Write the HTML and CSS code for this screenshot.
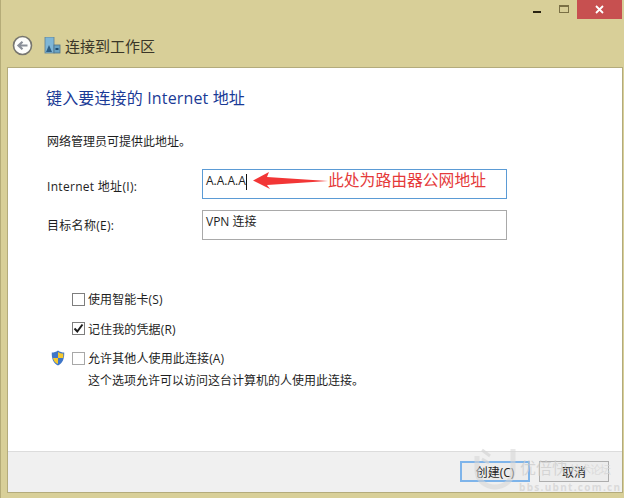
FILE: index.html
```html
<!DOCTYPE html>
<html lang="zh-CN">
<head>
<meta charset="utf-8">
<title>连接到工作区</title>
<link rel="stylesheet" href="styles.css">
</head>
<body>
<div class="window">
  <div class="titlebar">
    <span class="win-btn min"><svg width="9" height="3" viewBox="0 0 9 3"><rect width="8" height="2" y="0" fill="#2a2412"/></svg></span>
    <span class="win-btn max"><svg width="11" height="9" viewBox="0 0 11 9"><rect x=".5" y=".5" width="9" height="7" fill="none" stroke="#7a7045"/><rect x="0" y="0" width="10" height="2" fill="#7a7045"/></svg></span>
    <span class="win-btn close"><svg width="9" height="9" viewBox="0 0 9 9"><path d="M1 1l7 7M8 1L1 8" stroke="#fff" stroke-width="1.8"/></svg></span>
  </div>
  <div class="navbar">
    <svg class="back" width="21" height="21" viewBox="0 0 21 21"><circle cx="10.5" cy="10.5" r="9" fill="#fdfdfb" stroke="#77766f" stroke-width="1.6"/><path d="M15.5 10.5H7M10.5 6.8l-4 3.7 4 3.7" fill="none" stroke="#8a8f98" stroke-width="2.2"/></svg>
    <svg class="netico" width="17" height="17" viewBox="0 0 17 17"><rect x="1" y="0" width="9" height="16" fill="#7fb6d6" stroke="#5d7f95" stroke-width=".8"/><path d="M2 15l3-7 3 7z" fill="#2f5f85"/><rect x="10" y="8" width="6" height="8" fill="#6aa3c4" stroke="#4f7188" stroke-width=".8"/><rect x="11.500" y="11" width="3" height="2" fill="#1f4c70"/></svg>
    <span class="navtitle">连接到工作区</span>
  </div>
  <div class="panel">
    <main class="content">
      <h1 class="heading">键入要连接的 Internet 地址</h1>
      <p class="hint">网络管理员可提供此地址。</p>
      <div class="field first">
        <label class="field-label">Internet 地址(I):</label>
        <div class="input focus"><span class="val">A.A.A.A</span><span class="caret"></span>
          <svg class="arrow" width="76" height="18" viewBox="0 0 76 18"><path d="M0 8.500L16 0l-2 5 61 4-61 4 3 4z" fill="#f23636"/></svg>
          <span class="note">此处为路由器公网地址</span>
        </div>
      </div>
      <div class="field">
        <label class="field-label">目标名称(E):</label>
        <div class="input"><span class="val">VPN 连接</span></div>
      </div>
      <div class="options">
        <div class="check-row"><span class="box"></span><span class="opt">使用智能卡(S)</span></div>
        <div class="check-row"><span class="box"><svg width="11" height="11" viewBox="0 0 11 11"><path d="M1.500 5.500l2.800 3L9.500 1.500" fill="none" stroke="#1c1c1c" stroke-width="2"/></svg></span><span class="opt">记住我的凭据(R)</span></div>
        <div class="check-row shielded">
          <svg class="shield" width="14" height="16" viewBox="0 0 14 16"><path d="M7 .5C5 2 3 2.500 .8 2.500 .5 8 2 13 7 15.500 12 13 13.500 8 13.200 2.500 11 2.500 9 2 7 .5z" fill="#3f76c8"/><path d="M7 2v6H2c.3 2.500 2 5 5 6V8h5.200c.2-2 .1-3 0-4.500C10.500 3.500 8.500 3 7 2z" fill="#f6c92f"/></svg>
          <span class="box light"></span><span class="opt">允许其他人使用此连接(A)</span>
        </div>
        <p class="sub">这个选项允许可以访问这台计算机的人使用此连接。</p>
      </div>
    </main>
    <footer class="footer">
      <button class="btn primary">创建(C)</button>
      <button class="btn">取消</button>
    </footer>
  </div>
  <div class="watermark">
    <svg width="44" height="44" viewBox="0 0 44 44"><path d="M3 9v14c0 10 8 17 18 17s18-7 18-17V2" fill="none" stroke="#d6d6d6" stroke-width="5" opacity=".55"/><path d="M8 3l8 6M8 12l7 4" stroke="#d6d6d6" stroke-width="3" opacity=".7"/></svg>
    <span class="wm-big">优倍快</span><span class="wm-small">技术论坛</span>
    <span class="wm-url">bbs.ubnt.com.cn</span>
  </div>
</div>
</body>
</html>
```
FILE: styles.css
```css
* { box-sizing: border-box; }
html, body { margin: 0; padding: 0; }
body {
  width: 624px;
  height: 498px;
  overflow: hidden;
  font-family: "Open Sans", "Noto Sans CJK SC", sans-serif;
  font-size: 12px;
  color: #1e1e1e;
}
.window {
  position: relative;
  width: 624px;
  height: 498px;
  background: #d8cf98;
  border-left: 1px solid #b5ac78;
  display: flex;
  flex-direction: column;
  padding: 0 2px 6px 7px;
}
.titlebar {
  height: 19px;
  display: flex;
  justify-content: flex-end;
  flex: none;
}
.win-btn { display: flex; align-items: center; justify-content: center; height: 19px; }
.min { width: 30px; padding-top: 5px; }
.max { width: 24px; margin-right: 1px; }
.close { width: 45px; background: #c75050; }
.navbar {
  height: 49px;
  flex: none;
  display: flex;
  align-items: center;
  padding: 4px 0 0 4px;
}
.back { margin-right: 11px; }
.netico { margin-right: 4px; }
.navtitle { font-size: 15px; color: #3a3628; }
.panel {
  flex: 1;
  display: flex;
  flex-direction: column;
  background: #fff;
  box-shadow: 0 0 0 1px #b3ab7c;
  min-height: 0;
}
.content { flex: 1; padding: 0 0 0 38px; min-height: 0; }
.heading {
  margin: 19px 0 0;
  font-size: 16px;
  line-height: 22px;
  font-weight: 400;
  color: #1a3a96;
  letter-spacing: .15px;
}
.hint { margin: 25px 0 0 1px; line-height: 16px; font-size: 12px; }
.field { display: flex; align-items: center; margin-top: 10px; }
.field.first { margin-top: 19px; }
.field-label { width: 156px; padding-left: 1px; letter-spacing: .3px; }
.first .field-label { padding-top: 4px; }
.field + .field { margin-top: 11px; }
.input {
  position: relative;
  width: 305px;
  height: 30px;
  border: 1px solid #a9a9a9;
  padding: 2px 3px;
  display: flex;
  align-items: flex-start;
  line-height: 18px;
}
.input.focus { border-color: #5b9bd5; }
.val { font-size: 12px; }
.caret { width: 1px; height: 16px; background: #111; margin-top: 2px; }
.arrow { position: absolute; left: 50px; top: 2px; }
.note {
  position: absolute;
  left: 125px;
  top: 0;
  font-size: 15.800px;
  line-height: 20px;
  color: #e53a3a;
  white-space: nowrap;
}
.options { margin-top: 51px; padding-left: 26px; }
.check-row { position: relative; display: flex; align-items: center; gap: 3px; height: 16px; margin-bottom: 13.500px; }
.opt { letter-spacing: .12px; }
.box {
  width: 13px;
  height: 13px;
  border: 1px solid #7e7e7e;
  background: #fff;
  display: flex;
  align-items: center;
  justify-content: center;
  flex: none;
}
.box.light { border-color: #a8a8a8; }
.shield { position: absolute; left: -21px; top: 0; }
.sub { margin: -7px 0 0 16px; line-height: 16px; }
.footer {
  flex: none;
  height: 41px;
  background: #f0f0f0;
  border-top: 1px solid #dcdcdc;
  display: flex;
  justify-content: flex-end;
  align-items: flex-start;
  gap: 9px;
  padding: 9px 13px 0 0;
}
.btn {
  width: 70px;
  height: 21px;
  padding: 0;
  font: inherit;
  color: #1e1e1e;
  background: #ececec;
  border: 1px solid #adadad;
  border-radius: 0;
}
.btn.primary { border: 2px solid #7eb4ea; }
.watermark {
  position: absolute;
  left: 473px;
  top: 447px;
  width: 150px;
  height: 48px;
  pointer-events: none;
}
.watermark svg { position: absolute; left: 0; top: 0; }
.wm-big { position: absolute; left: 46px; top: 10px; font-size: 16px; line-height: 22px; color: rgba(205,205,205,.75); }
.wm-small { position: absolute; left: 96px; top: 15px; font-size: 11px; line-height: 16px; color: rgba(215,215,215,.8); white-space: nowrap; letter-spacing: -1px; }
.wm-url { position: absolute; left: 45px; top: 34px; font-size: 10px; line-height: 12px; letter-spacing: 1.300px; font-weight: 700; color: rgba(215,215,215,.9); white-space: nowrap; }
```
